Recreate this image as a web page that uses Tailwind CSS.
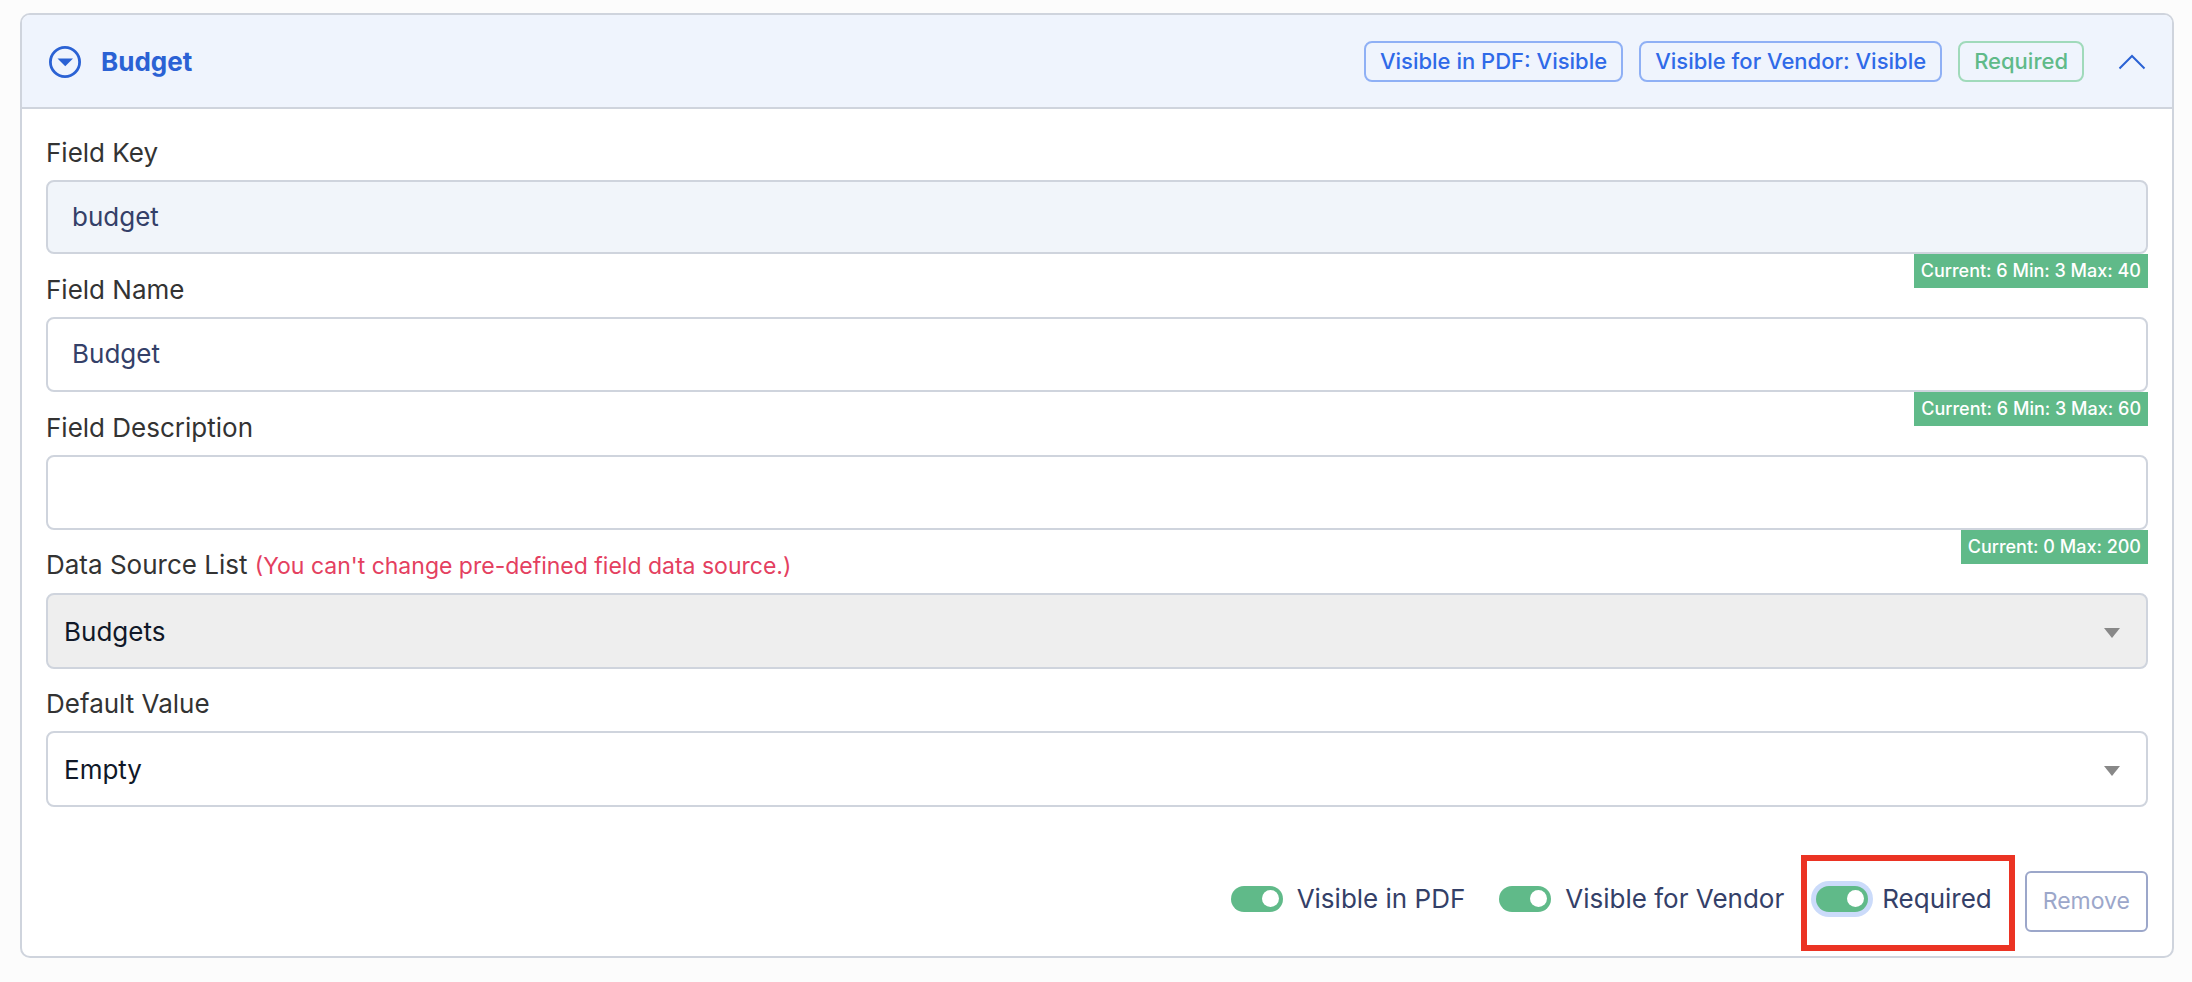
<!DOCTYPE html>
<html lang="en">
<head>
<meta charset="utf-8">
<title>Budget field</title>
<script src="https://cdn.jsdelivr.net/npm/@tailwindcss/browser@4"></script>
</head>
<body class="min-h-screen bg-[#fcfcfc] pt-[13px] pr-[18px] pb-5 pl-5 font-['Inter',sans-serif] text-[26px] leading-8 text-[#333333]">
<main class="rounded-[10px] border-2 border-[#cfd4dd] bg-white">
  <header class="flex h-[94px] items-center rounded-t-lg border-b-2 border-[#cfd4dd] bg-[#eff4fd] pt-px pr-[26px] pl-[27px]">
    <svg class="size-8" viewBox="0 0 32 32" aria-hidden="true"><circle cx="16" cy="16" r="14.6" fill="none" stroke="#2b62d4" stroke-width="2.8"/><path d="M8.500 12.500h15.500l-7.750 7.700z" fill="#2b62d4"/></svg>
    <h2 class="ml-5 font-bold text-[#2b62d4]">Budget</h2>
    <div class="ml-auto flex items-center gap-4 text-[22px] leading-[37px] font-medium">
      <span class="rounded-lg border-2 border-[#8fb0f5] px-[14px] text-[#2f6ae8]">Visible in PDF: Visible</span>
      <span class="rounded-lg border-2 border-[#8fb0f5] px-[14px] text-[#2f6ae8]">Visible for Vendor: Visible</span>
      <span class="rounded-lg border-2 border-[#a0dabb] px-[14px] text-[#60ba89]">Required</span>
    </div>
    <button type="button" aria-label="Collapse" class="ml-[34px]"><svg class="block h-4 w-7" viewBox="0 0 28 16" fill="none" stroke="#2b62d4" stroke-width="2"><path d="M1.500 14.500 14 2l12.500 12.500"/></svg></button>
  </header>
  <form class="px-6 pb-[5px]">
    <div class="flex h-[145px] flex-col justify-end">
      <label for="key" class="mb-[11px]">Field Key</label>
      <input id="key" type="text" value="budget" readonly class="h-[74px] w-full rounded-lg border-2 border-[#cfd4dd] bg-[#f1f5fa] px-6 pb-[2px] text-[#344068]">
    </div>
    <div class="relative flex h-[138px] flex-col justify-end">
      <span class="absolute top-0 right-0 bg-[#60ba89] px-[7px] text-[18px] leading-[34px] font-medium text-white">Current: 6 Min: 3 Max: 40</span>
      <label for="name" class="mb-[11px]">Field Name</label>
      <input id="name" type="text" value="Budget" class="h-[75px] w-full rounded-lg border-2 border-[#cfd4dd] bg-white px-6 pb-[2px] text-[#344068]">
    </div>
    <div class="relative flex h-[138px] flex-col justify-end">
      <span class="absolute top-0 right-0 bg-[#60ba89] px-[7px] text-[18px] leading-[34px] font-medium text-white">Current: 6 Min: 3 Max: 60</span>
      <label for="desc" class="mb-[11px]">Field Description</label>
      <input id="desc" type="text" class="h-[75px] w-full rounded-lg border-2 border-[#cfd4dd] bg-white px-6 pb-[2px] text-[#344068]">
    </div>
    <div class="relative flex h-[139px] flex-col justify-end">
      <span class="absolute top-0 right-0 bg-[#60ba89] px-[7px] text-[18px] leading-[34px] font-medium text-white">Current: 0 Max: 200</span>
      <label for="source" class="mb-[11px]">Data Source List <span class="text-[23px] text-[#e4405f]">(You can't change pre-defined field data source.)</span></label>
      <div class="relative">
        <select id="source" disabled class="block h-[76px] w-full appearance-none rounded-lg border-2 border-[#cfd4dd] bg-[#eeeeee] px-4 pt-[2px] text-[#101828] opacity-100"><option>Budgets</option></select>
        <svg class="pointer-events-none absolute top-[35px] right-7 h-[10px] w-4" viewBox="0 0 16 10" aria-hidden="true"><path d="M0 0h16L8 10z" fill="#888"/></svg>
      </div>
    </div>
    <div class="flex h-[138px] flex-col justify-end">
      <label for="default" class="mb-[11px]">Default Value</label>
      <div class="relative">
        <select id="default" class="block h-[76px] w-full appearance-none rounded-lg border-2 border-[#cfd4dd] bg-white px-4 pt-[2px] text-[#101828]"><option>Empty</option></select>
        <svg class="pointer-events-none absolute top-[35px] right-7 h-[10px] w-4" viewBox="0 0 16 10" aria-hidden="true"><path d="M0 0h16L8 10z" fill="#888"/></svg>
      </div>
    </div>
    <div class="mt-12 flex items-start justify-end text-[#344068]">
      <label class="mt-7 mr-[34px] flex items-center gap-[14px]"><input type="checkbox" role="switch" checked class="h-[26px] w-[52px] appearance-none rounded-full bg-[#60ba89] pl-[31px] before:mt-1 before:block before:size-[17px] before:rounded-full before:bg-white">Visible in PDF</label>
      <label class="mt-7 mr-[17px] flex items-center gap-[14px]"><input type="checkbox" role="switch" checked class="h-[26px] w-[52px] appearance-none rounded-full bg-[#60ba89] pl-[31px] before:mt-1 before:block before:size-[17px] before:rounded-full before:bg-white">Visible for Vendor</label>
      <div class="mr-[10px] flex h-24 items-start border-6 border-[#eb3323] pr-[17px] pl-[9px]">
        <label class="mt-[22px] flex items-center gap-[14px]"><input type="checkbox" role="switch" checked class="h-[26px] w-[52px] appearance-none rounded-full bg-[#60ba89] pl-[31px] ring-5 ring-[#cbdbfa] before:mt-1 before:block before:size-[17px] before:rounded-full before:bg-white">Required</label>
      </div>
      <button type="button" class="mt-4 h-[61px] rounded-md border-2 border-[#9ca7ca] px-4 pb-[2px] text-[23px] text-[#9ca7ca]">Remove</button>
    </div>
  </form>
</main>
</body>
</html>
